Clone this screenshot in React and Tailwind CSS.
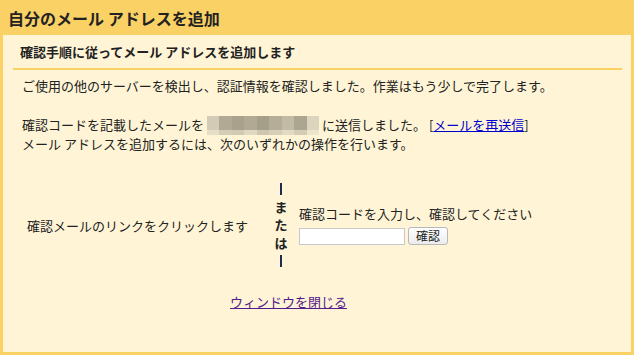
import React from "react";

const font = { fontFamily: '"Noto Sans CJK JP", "Noto Sans", sans-serif' };

function Blur() {
  const top = ["#d3cbb5", "#b0a995", "#a9a18c", "#b1a994", "#a59e88", "#b5ad98", "#c1baa4", "#aca590", "#dcd4bd"];
  const bot = ["#e6dec6", "#d5cdb6", "#d2cab3", "#e0d8c1", "#cec6af", "#d6ceb7", "#e2dac3", "#d4ccb5", "#ede5cd"];
  return (
    <span className="inline-flex flex-col align-middle mx-[3px] w-[112px] h-[19px] -mt-[2px]">
      <span className="flex h-[14px]">
        {top.map((c, i) => (
          <span key={i} className="flex-1" style={{ background: c }} />
        ))}
      </span>
      <span className="flex h-[5px]">
        {bot.map((c, i) => (
          <span key={i} className="flex-1" style={{ background: c }} />
        ))}
      </span>
    </span>
  );
}

export default function App() {
  return (
    <div className="w-[634px] h-[355px] bg-[#fad165] flex flex-col text-[#222]" style={font}>
      <div className="h-[35px] flex items-center px-[8px] shrink-0">
        <span className="text-[16px] font-bold leading-none text-[#222]">自分のメール アドレスを追加</span>
      </div>
      <div className="flex-1 ml-[3px] mr-[3px] mb-[3px] bg-[#fff5d6] flex flex-col pl-[10px] pr-[9px]">
        <div className="h-[35px] flex items-center pl-[7px] border-b-2 border-[#fad165] shrink-0">
          <span className="text-[13px] font-bold leading-none">確認手順に従ってメール アドレスを追加します</span>
        </div>
        <div className="pl-[9px] text-[13px] leading-[18px]">
          <p className="mt-[7px]">ご使用の他のサーバーを検出し、認証情報を確認しました。作業はもう少しで完了します。</p>
          <p className="mt-[21px]">
            確認コードを記載したメールを
            <Blur />
            に送信しました。 [<a href="#" className="text-[#0000cc] underline">メールを再送信</a>]
          </p>
          <p>メール アドレスを追加するには、次のいずれかの操作を行います。</p>
        </div>
        <div className="mt-[25px] flex items-center h-[95px]">
          <div className="w-[250px] pl-[14px] text-[13px]">確認メールのリンクをクリックします</div>
          <div className="w-[36px] flex flex-col items-center text-[13px] font-bold leading-[18px]">
            <div className="h-[18px] flex items-center"><div className="w-[2px] h-[12px] bg-[#1d2d50]" /></div>
            <div>ま</div>
            <div>た</div>
            <div>は</div>
            <div className="h-[18px] flex items-center"><div className="w-[2px] h-[12px] bg-[#1d2d50]" /></div>
          </div>
          <div className="flex flex-col">
            <div className="text-[13px] leading-[18px]">確認コードを入力し、確認してください</div>
            <div className="flex items-center mt-[4px]">
              <input className="w-[106px] h-[17px] bg-white border border-[#c8c8c8] outline-none" />
              <button className="ml-[3px] h-[18px] px-[7px] text-[12px] leading-none bg-gradient-to-b from-white to-[#ececec] border border-[#b8b8b8] rounded-[3px]" style={font}>確認</button>
            </div>
          </div>
        </div>
        <div className="mt-[20px] pl-[217px] text-[13px] leading-[18px]">
          <a href="#" className="text-[#551a8b] underline">ウィンドウを閉じる</a>
        </div>
      </div>
    </div>
  );
}
